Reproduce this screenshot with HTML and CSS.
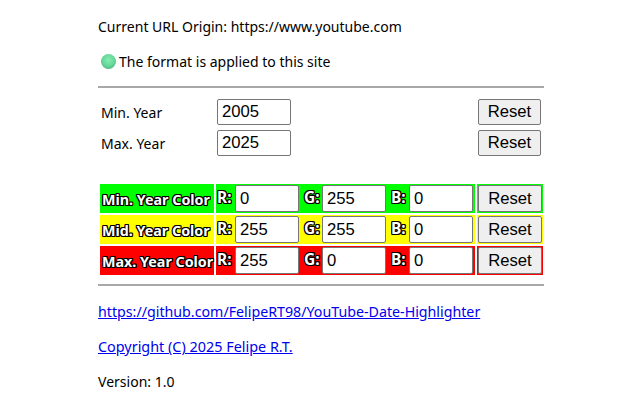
FILE: index.html
```html
<!DOCTYPE html>
<html lang="en">
<head>
<meta charset="utf-8">
<title>YouTube Date Highlighter</title>
<link rel="stylesheet" href="styles.css">
</head>
<body>
<main class="page">
  <p class="line">Current URL Origin: https://www.youtube.com</p>
  <p class="line status"><span class="dot"></span>The format is applied to this site</p>
  <hr class="rule">
  <div class="years">
    <div class="year-row">
      <label class="year-label">Min. Year</label>
      <input class="field year-field" value="2005">
      <button class="btn">Reset</button>
    </div>
    <div class="year-row">
      <label class="year-label">Max. Year</label>
      <input class="field year-field" value="2025">
      <button class="btn">Reset</button>
    </div>
  </div>
  <table class="colors">
    <tr class="min">
      <td class="name">Min. Year Color</td>
      <td class="rgb"><div class="rgb-wrap"><b class="tag">R:</b><input class="field rgb-field" value="0"><b class="tag">G:</b><input class="field rgb-field" value="255"><b class="tag">B:</b><input class="field rgb-field" value="0"></div></td>
      <td class="action"><button class="btn">Reset</button></td>
    </tr>
    <tr class="mid">
      <td class="name">Mid. Year Color</td>
      <td class="rgb"><div class="rgb-wrap"><b class="tag">R:</b><input class="field rgb-field" value="255"><b class="tag">G:</b><input class="field rgb-field" value="255"><b class="tag">B:</b><input class="field rgb-field" value="0"></div></td>
      <td class="action"><button class="btn">Reset</button></td>
    </tr>
    <tr class="max">
      <td class="name">Max. Year Color</td>
      <td class="rgb"><div class="rgb-wrap"><b class="tag">R:</b><input class="field rgb-field" value="255"><b class="tag">G:</b><input class="field rgb-field" value="0"><b class="tag">B:</b><input class="field rgb-field" value="0"></div></td>
      <td class="action"><button class="btn">Reset</button></td>
    </tr>
  </table>
  <hr class="rule rule-low">
  <p class="line link-line"><a href="#">https://github.com/FelipeRT98/YouTube-Date-Highlighter</a></p>
  <p class="line copy-line"><a href="#">Copyright (C) 2025 Felipe R.T.</a></p>
  <p class="line">Version: 1.0</p>
</main>
</body>
</html>
```
FILE: styles.css
```css
html, body { margin: 0; padding: 0; background: #fff; }
body { font-family: "Noto Sans", "Open Sans", sans-serif; font-size: 14.03px; color: #000; overflow: hidden; }
.page { width: 446px; margin-left: 98px; padding-top: 17px; }
.line { margin: 0 0 16px; height: 19px; line-height: 19px; white-space: nowrap; }
.link-line { font-size: 14.22px; }
.copy-line { font-size: 14.4px; }
.status { display: flex; align-items: center; margin-left: 3px; margin-bottom: 15px; }
.dot { width: 15px; height: 15px; border-radius: 50%; margin-right: 3px; background: radial-gradient(circle at 50% 40%, #86eeb0 0%, #66d89a 50%, #3f9f78 100%); }
.rule { height: 0; margin: 0; border: 0; border-top: 2px solid #a8a8a8; }
.years { display: flex; flex-direction: column; gap: 5px; padding: 11px 3px 0 3px; }
.year-row { display: flex; align-items: center; height: 26px; }
.year-label { width: 116px; }
.year-field { width: 74px; height: 26px; }
.field { box-sizing: border-box; margin: 0; padding: 0 4px; border: 1px solid #767676; border-radius: 2px; background: #fff; font: 16.67px "Liberation Sans", Arial, sans-serif; color: #000; }
.btn { box-sizing: border-box; width: 63px; height: 26px; margin: 0 0 0 auto; padding: 0; border: 1px solid #767676; border-radius: 2px; background: #efefef; font: 16.67px "Liberation Sans", Arial, sans-serif; color: #000; }
.colors { margin: 26px 0 0 0; border-spacing: 2px; border-collapse: separate; width: 447px; table-layout: fixed; }
.colors td { padding: 0; height: 29px; }
.name { width: 112px; font-weight: 700; font-size: 14.3px; color: #fff; white-space: nowrap; text-align: left; }
.colors .name { padding: 1px 0 0 2px; height: 28px; }
.rgb { width: 259px; }
.colors .action { padding: 1px; height: 27px; }
.action .btn { display: block; width: 100%; height: 27px; }
.rgb-wrap { display: flex; align-items: center; }
.tag { width: 19px; padding: 0 0 3px 1px; box-sizing: border-box; font-size: 15.5px; color: #fff; }
.rgb-field { width: 64px; height: 27px; margin-right: 4px; }
.rgb-field:last-child { margin-right: 0; }
.name, .tag { text-shadow: 1px 1px 0 #000, -1px -1px 0 #000, 1px -1px 0 #000, -1px 1px 0 #000, 1px 0 0 #000, 0 1px 0 #000, -1px 0 0 #000, 0 -1px 0 #000; }
.min td { background: #00ff00; }
.mid td { background: #ffff00; }
.max td { background: #ff0000; }
.rule-low { margin: 7px 0 16px; }
a { color: #0000ee; }
```
